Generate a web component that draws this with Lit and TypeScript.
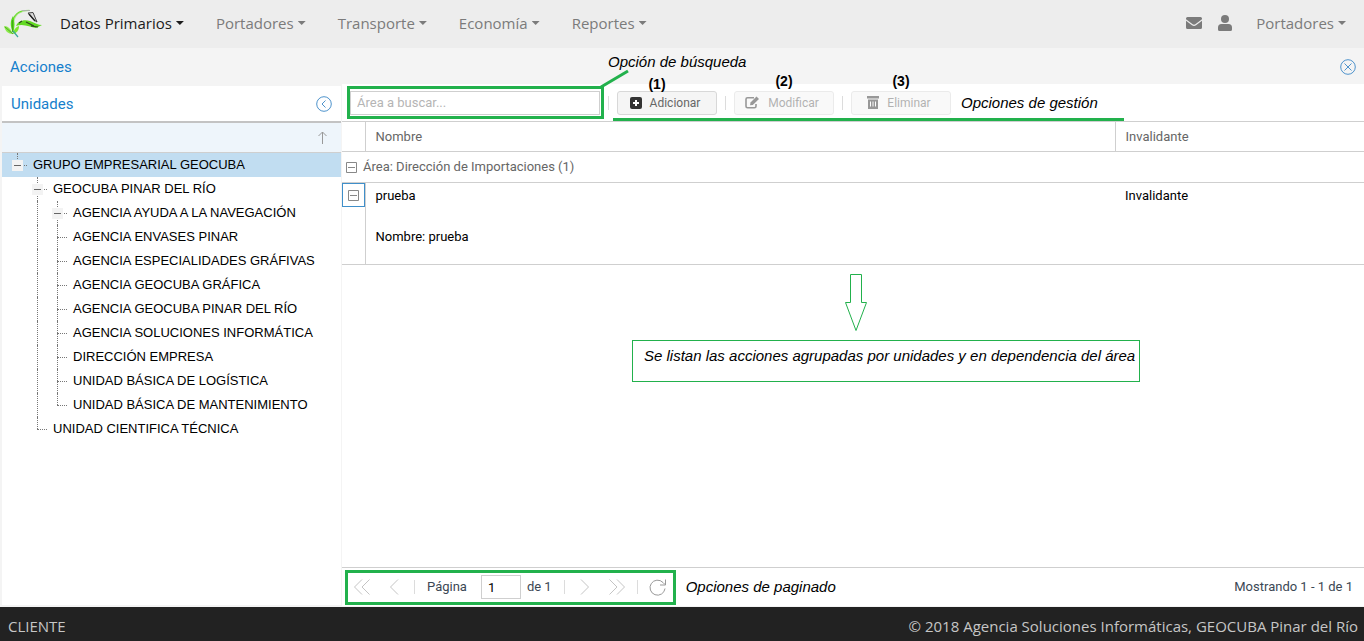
import { LitElement, html, css, svg, nothing } from "lit";
import { customElement } from "lit/decorators.js";
import { classMap } from "lit/directives/class-map.js";

type Guide = "empty" | "line" | "tee" | "elbow";

interface TreeRow {
  label: string;
  guides: Guide[];
  expandable?: boolean;
  selected?: boolean;
}

const TREE: TreeRow[] = [
  { label: "GRUPO EMPRESARIAL GEOCUBA", guides: ["elbow"], expandable: true, selected: true },
  { label: "GEOCUBA PINAR DEL RÍO", guides: ["empty", "tee"], expandable: true },
  { label: "AGENCIA AYUDA A LA NAVEGACIÓN", guides: ["empty", "line", "tee"], expandable: true },
  { label: "AGENCIA ENVASES PINAR", guides: ["empty", "line", "tee"] },
  { label: "AGENCIA ESPECIALIDADES GRÁFIVAS", guides: ["empty", "line", "tee"] },
  { label: "AGENCIA GEOCUBA GRÁFICA", guides: ["empty", "line", "tee"] },
  { label: "AGENCIA GEOCUBA PINAR DEL RÍO", guides: ["empty", "line", "tee"] },
  { label: "AGENCIA SOLUCIONES INFORMÁTICA", guides: ["empty", "line", "tee"] },
  { label: "DIRECCIÓN EMPRESA", guides: ["empty", "line", "tee"] },
  { label: "UNIDAD BÁSICA DE LOGÍSTICA", guides: ["empty", "line", "tee"] },
  { label: "UNIDAD BÁSICA DE MANTENIMIENTO", guides: ["empty", "line", "elbow"] },
  { label: "UNIDAD CIENTIFICA TÉCNICA", guides: ["empty", "elbow"] },
];

const MENUS = ["Datos Primarios", "Portadores", "Transporte", "Economía", "Reportes"];

const reset = css`
  *,
  *::before,
  *::after {
    box-sizing: border-box;
  }
  button {
    font: inherit;
    color: inherit;
    background: none;
    border: 0;
    padding: 0;
    margin: 0;
    display: inline-flex;
    align-items: center;
    justify-content: center;
  }
  svg {
    display: block;
    flex: none;
  }
`;

const stroked = (size: number, body: unknown) => html`<svg
  width=${size}
  height=${size}
  viewBox="0 0 ${size} ${size}"
  fill="none"
  stroke="currentColor"
  aria-hidden="true"
>
  ${body}
</svg>`;

@customElement("nav-bar")
class NavBar extends LitElement {
  static styles = [
    reset,
    css`
      :host {
        display: flex;
        align-items: center;
        justify-content: space-between;
        box-sizing: border-box;
        height: 48px;
        padding: 0 18px 2px 4px;
        background: #ededed;
        color: #7b7b7b;
        font: 15px/24px "Open Sans", "Noto Sans", sans-serif;
      }
      .menus {
        display: flex;
        align-items: center;
        gap: 32px;
      }
      .logo {
        margin-right: -14px;
      }
      .menu {
        gap: 4px;
        white-space: nowrap;
      }
      .menu.active {
        color: #1c1c1c;
      }
      .caret {
        width: 8px;
        height: 4px;
        background: currentColor;
        clip-path: polygon(0 0, 100% 0, 50% 100%);
      }
      .user {
        display: flex;
        align-items: center;
        gap: 16px;
      }
      .user .menu {
        margin-left: 8px;
      }
    `,
  ];

  private menu(label: string, active = false) {
    return html`<button class=${classMap({ menu: true, active })}>
      ${label}<span class="caret"></span>
    </button>`;
  }

  render() {
    return html`
      <nav class="menus">
        <svg class="logo" width="38" height="30" viewBox="0 0 38 30" fill="none" aria-label="Logo" role="img">
          <path d="M9 14C11 7 16 2 26 2.500" stroke="#a9e58a" stroke-width="1.200" />
          <path d="M9 11C11 7 14 4 18 3" stroke="#6bdc2c" stroke-width="1.200" />
          <path d="M18 2.500L26 2.500" stroke="#aaa" stroke-width=".8" />
          <path d="M24 5L29 4.500L33 14L30 12Z" fill="#ddd" stroke="#444" stroke-width="1" />
          <path d="M25 6L31 13" stroke="#222" stroke-width="1.400" />
          <path d="M12 18C14 13 20 11 26 13C31 15 34 17 38 17L32 20C26 19 19 15 12 18Z" fill="#62d922" />
          <path d="M15 15L18 13M22 14L30 18M27 18L34 19" stroke="#2c4a1c" stroke-width="1.200" />
          <path d="M9 8C6 13 6 18 9 25C11 19 11 14 9 8Z" fill="#55d61a" />
          <path d="M0 18C4 18 7 21 9 26C4 26 1 23 0 18Z" fill="#8bea4a" />
          <path d="M9 26C9 22 12 19 15 18C15 22 13 25 9 26Z" fill="#7ee62f" />
          <path d="M1 19L9 26M8.500 12V24" stroke="#3d9a19" stroke-width=".8" />
          <path d="M9 23L14 29" stroke="#3aa79a" stroke-width="1.200" />
        </svg>
        ${MENUS.map((m, i) => this.menu(m, i === 0))}
      </nav>
      <div class="user">
        <button aria-label="Mensajes">
          <svg width="16" height="12" viewBox="0 0 16 12" fill="currentColor">
            <path
              d="M1.500 0h13a1.500 1.500 0 0 1 1.500 1.500v.7L9.300 7.300c-.8.600-1.800.600-2.600 0L0 2.200v-.7A1.500 1.500 0 0 1 1.500 0zM0 3.700l6 4.600c1.200.9 2.800.9 4 0l6-4.600v6.800a1.500 1.500 0 0 1-1.500 1.500h-13A1.500 1.500 0 0 1 0 10.500z"
            />
          </svg>
        </button>
        <button aria-label="Usuario">
          <svg width="14" height="16" viewBox="0 0 14 16" fill="currentColor">
            <circle cx="7" cy="4" r="4" />
            <path d="M3.500 9h7A3.500 3.500 0 0 1 14 12.500v2a1.500 1.500 0 0 1-1.500 1.500h-11A1.500 1.500 0 0 1 0 14.500v-2A3.500 3.500 0 0 1 3.500 9z" />
          </svg>
        </button>
        ${this.menu("Portadores")}
      </div>
    `;
  }
}

@customElement("unit-tree")
class UnitTree extends LitElement {
  static styles = [
    reset,
    css`
      :host {
        display: flex;
        flex-direction: column;
        background: #fff;
        font: 13px/24px "Liberation Sans", Arial, sans-serif;
        color: #000;
      }
      .head {
        display: flex;
        align-items: center;
        justify-content: space-between;
        height: 37px;
        padding: 0 9px;
        border-bottom: 2px solid #c3c3c3;
      }
      h2 {
        margin: 0;
        font: 15px/20px Roboto, sans-serif;
        color: #157fcc;
      }
      .collapse {
        color: #4e93cc;
      }
      .sort {
        display: flex;
        justify-content: flex-end;
        height: 30px;
        padding: 0 13px;
        background: #eef5fb;
        border-bottom: 1px solid #cfcfcf;
        color: #999;
      }
      ul {
        list-style: none;
        margin: 0;
        padding: 0;
      }
      .row {
        display: flex;
        height: 24px;
        padding-left: 5px;
        white-space: nowrap;
      }
      .row.selected {
        background: #c1ddf1;
      }
      .label {
        padding-left: 6px;
      }
      .guide {
        display: grid;
        grid-template: 12px 12px / 10px 10px;
        width: 20px;
      }
      .line::before,
      .tee::before {
        content: "";
        grid-area: 1 / 2 / 3 / 3;
        border-left: 1px dotted #777;
      }
      .elbow::before {
        content: "";
        grid-area: 1 / 2 / 2 / 3;
        border-left: 1px dotted #777;
      }
      .tee::after,
      .elbow::after {
        content: "";
        grid-area: 2 / 2 / 3 / 3;
        border-top: 1px dotted #777;
      }
      .toggle {
        grid-area: 1 / 1 / 3 / 3;
        place-self: center;
        width: 11px;
        height: 11px;
        margin-left: 1px;
        background: #f3f3f3;
        z-index: 1;
      }
      .toggle::before {
        content: "";
        width: 7px;
        height: 1px;
        background: #666;
      }
    `,
  ];

  private guide(kind: Guide, toggle: boolean) {
    return html`<span class="guide ${kind}"
      >${toggle ? html`<button class="toggle" aria-label="Contraer"></button>` : nothing}</span
    >`;
  }

  render() {
    return html`
      <header class="head">
        <h2>Unidades</h2>
        <button class="collapse" aria-label="Ocultar panel">
          ${stroked(16, svg`<circle cx="8" cy="8" r="7.300"/><path d="M9.500 4.500L6 8l3.500 3.500"/>`)}
        </button>
      </header>
      <button class="sort" aria-label="Ordenar">
        ${stroked(12, svg`<path transform="translate(0 -1)" d="M6.500 14V1M2.500 5L6.500 1L10.500 5" />`)}
      </button>
      <ul>
        ${TREE.map(
          (r) => html`<li class=${classMap({ row: true, selected: !!r.selected })}>
            ${r.guides.map((g, i) => this.guide(g, !!r.expandable && i === r.guides.length - 1))}
            <span class="label">${r.label}</span>
          </li>`
        )}
      </ul>
    `;
  }
}

@customElement("actions-grid")
class ActionsGrid extends LitElement {
  static styles = [
    reset,
    css`
      :host {
        display: flex;
        flex-direction: column;
        background: #fff;
        font: 13px/20px Roboto, sans-serif;
        color: #666;
        min-width: 0;
      }
      .toolbar {
        display: flex;
        align-items: center;
        gap: 8px;
        height: 37px;
        padding: 0 8px;
      }
      .search {
        position: relative;
        display: flex;
      }
      .search input {
        width: 250px;
        height: 24px;
        padding: 0 6px;
        border: 1px solid #cfcfcf;
        outline: 0;
        font: inherit;
      }
      .search input::placeholder {
        color: #b5b5b5;
        opacity: 1;
      }
      .mark {
        position: absolute;
        inset: -5px -4px -4px -3px;
        border: 3px solid #22b14c;
        pointer-events: none;
      }
      .leader {
        position: absolute;
        left: 250px;
        top: -22px;
        pointer-events: none;
      }
      .note {
        font: italic 15px/20px "Liberation Sans", Arial, sans-serif;
        color: #000;
        white-space: nowrap;
      }
      .search .note {
        position: absolute;
        left: 258px;
        top: -39px;
      }
      .sep {
        width: 1px;
        height: 14px;
        background: #dcdcdc;
      }
      .manage {
        position: relative;
        display: flex;
        align-items: center;
        gap: 8px;
        padding-right: 26px;
      }
      .manage::after {
        content: "";
        position: absolute;
        left: -4px;
        right: 0;
        bottom: -6px;
        height: 3px;
        background: #22b14c;
      }
      .action {
        position: relative;
        display: flex;
      }
      .action button {
        width: 100px;
        height: 24px;
        gap: 8px;
        padding-right: 4px;
        border: 1px solid #d8d8d8;
        border-radius: 3px;
        background: #f5f5f5;
        font-size: 12px;
      }
      .action button:disabled {
        opacity: 0.5;
      }
      .action svg {
        color: #333;
      }
      .tag {
        position: absolute;
        inset: -19px 0 auto;
        text-align: center;
        font: bold 14px/18px "Liberation Sans", Arial, sans-serif;
        color: #000;
        pointer-events: none;
      }
      .tag.low {
        inset: -16px 20px auto 0;
      }
      .manage .note {
        margin-left: 2px;
      }
      table {
        width: 100%;
        table-layout: fixed;
        border-collapse: collapse;
      }
      .c-toggle {
        width: 23px;
      }
      .c-flag {
        width: 249px;
      }
      th,
      td {
        padding: 0 10px;
        font-weight: normal;
        text-align: left;
        vertical-align: middle;
      }
      thead tr {
        height: 30px;
        border-top: 1px solid #cfcfcf;
        border-bottom: 1px solid #cfcfcf;
      }
      th + th {
        border-left: 1px solid #cfcfcf;
      }
      .group {
        height: 31px;
        border-bottom: 1px solid #cfcfcf;
      }
      .group td {
        padding: 2px 4px 0;
      }
      .group button {
        gap: 6px;
      }
      .group svg {
        color: #888;
      }
      .record {
        color: #000;
      }
      .record td {
        height: 25px;
        padding-top: 2px;
      }
      .record .side {
        padding: 0;
        border-right: 1px solid #cfcfcf;
        vertical-align: top;
      }
      .side button {
        width: 23px;
        height: 24px;
        border: 1px solid #3f8fca;
        color: #888;
      }
      .detail {
        border-bottom: 1px solid #cfcfcf;
      }
      .detail td {
        height: 57px;
      }
      .body {
        flex: 1;
      }
      .callout {
        width: max-content;
        margin: 9px 0 0 290px;
      }
      .callout svg {
        margin-left: 213px;
      }
      .callout p {
        margin: 8px 0 0;
        padding: 5px 4px 15px 11px;
        border: 1px solid #22b14c;
      }
      .pager {
        display: flex;
        align-items: center;
        height: 40px;
        padding: 0 11px 0 6px;
        border-top: 1px solid #cfcfcf;
        border-bottom: 1px solid #f4f4f4;
        color: #3b4754;
      }
      .pages {
        position: relative;
        display: flex;
        align-items: center;
      }
      .pages .mark {
        inset: -5px -4px -6px -3px;
      }
      .pages button {
        width: 28px;
        height: 24px;
        color: #c4c4c4;
      }
      .pages button + button {
        margin-left: 4px;
      }
      .pages .refresh {
        color: #999;
      }
      .pages label {
        display: flex;
        align-items: center;
        gap: 14px;
        margin: 0 6px;
      }
      .pages input {
        width: 40px;
        height: 24px;
        padding: 0 6px;
        border: 1px solid #cfcfcf;
        outline: 0;
        color: #000;
        font: inherit;
      }
      .pages .sep {
        margin: 0 6px;
      }
      .pager .note {
        margin-left: 14px;
      }
      .status {
        margin-left: auto;
      }
      .of {
        margin-right: 6px;
      }
    `,
  ];

  private action(label: string, tag: string, icon: unknown, disabled = false) {
    return html`<div class="action">
      <button ?disabled=${disabled}>${icon}${label}</button>
      <span class=${classMap({ tag: true, low: !disabled })}>${tag}</span>
    </div>`;
  }

  private box() {
    return stroked(11, svg`<path d="M.5 .5h10v10H.5zM2 5.500h7" />`);
  }

  render() {
    const add = html`<svg width="12" height="12" viewBox="0 0 12 12">
      <rect width="12" height="12" rx="2" fill="currentColor" />
      <path d="M6 3v6M3 6h6" stroke="#fff" stroke-width="2" />
    </svg>`;
    const edit = html`<svg width="15" height="13" viewBox="0 0 15 13" fill="none" stroke="currentColor">
      <path d="M9 1.700H2.500Q1 1.700 1 3.200v7.100Q1 11.800 2.500 11.800h7Q11 11.800 11 10.300V8" stroke-width="1.600" />
      <path d="M5 9.200l.5-2.700L11.500 .5l2.500 2.400-6.200 6z" fill="currentColor" stroke="none" />
    </svg>`;
    const trash = html`<svg width="12" height="13" viewBox="0 0 12 13">
      <path d="M0 0h12v2.500H0zM1 3.500h10V13H1z" fill="currentColor" />
      <path d="M3.500 5.500v5M6 5.500v5M8.500 5.500v5" stroke="#fff" />
    </svg>`;
    return html`
      <div class="toolbar">
        <div class="search">
          <input type="text" placeholder="Área a buscar..." aria-label="Área a buscar" />
          <span class="mark"></span>
          <svg class="leader" width="30" height="20" viewBox="0 0 30 20" fill="none">
            <path d="M1 18L28 2" stroke="#22b14c" stroke-width="3" />
          </svg>
          <span class="note">Opción de búsqueda</span>
        </div>
        <span class="sep"></span>
        <div class="manage">
          ${this.action("Adicionar", "(1)", add)}
          <span class="sep"></span>
          ${this.action("Modificar", "(2)", edit, true)}
          <span class="sep"></span>
          ${this.action("Eliminar", "(3)", trash, true)}
          <span class="note">Opciones de gestión</span>
        </div>
      </div>
      <table>
        <colgroup>
          <col class="c-toggle" />
          <col />
          <col class="c-flag" />
        </colgroup>
        <thead>
          <tr>
            <th></th>
            <th>Nombre</th>
            <th>Invalidante</th>
          </tr>
        </thead>
        <tbody>
          <tr class="group">
            <td colspan="3"><button>${this.box()}Área: Dirección de Importaciones (1)</button></td>
          </tr>
          <tr class="record">
            <td class="side" rowspan="2">
              <button aria-label="Contraer fila">${this.box()}</button>
            </td>
            <td>prueba</td>
            <td>Invalidante</td>
          </tr>
          <tr class="record detail">
            <td colspan="2">Nombre: prueba</td>
          </tr>
        </tbody>
      </table>
      <div class="body">
        <div class="callout">
          <svg width="22" height="58" viewBox="0 0 22 58" fill="none" stroke="#22b14c">
            <path d="M5.500 .5h11v28h5L11 56.500L.5 28.500h5z" />
          </svg>
          <p class="note">Se listan las acciones agrupadas por unidades y en dependencia del área</p>
        </div>
      </div>
      <div class="pager">
        <div class="pages">
          <button aria-label="Primera página">
            ${stroked(16, svg`<path d="M8 .5L.5 8L8 15.500M15.500 .5L8 8l7.500 7.500" />`)}
          </button>
          <button aria-label="Página anterior">
            ${stroked(16, svg`<path d="M12 .5L4.500 8l7.500 7.500" />`)}
          </button>
          <span class="sep"></span>
          <label>Página<input type="text" value="1" /></label>
          <span class="of">de 1</span>
          <span class="sep"></span>
          <button aria-label="Página siguiente">
            ${stroked(16, svg`<path d="M4 .5L11.500 8L4 15.500" />`)}
          </button>
          <button aria-label="Última página">
            ${stroked(16, svg`<path d="M.5 .5L8 8L.5 15.500M8 .5L15.500 8L8 15.500" />`)}
          </button>
          <span class="sep"></span>
          <button class="refresh" aria-label="Actualizar">
            ${stroked(17, svg`<path d="M16 9.500A7.500 7.500 0 1 1 14 3.500L16 5.500M16.500 .5V6H11" />`)}
          </button>
          <span class="mark"></span>
        </div>
        <span class="note">Opciones de paginado</span>
        <span class="status">Mostrando 1 - 1 de 1</span>
      </div>
    `;
  }
}

@customElement("app-root")
class AppRoot extends LitElement {
  static styles = [
    reset,
    css`
      :host {
        display: flex;
        flex-direction: column;
        min-height: 100vh;
        background: #f4f4f4;
      }
      .title {
        display: flex;
        align-items: center;
        justify-content: space-between;
        height: 36px;
        padding: 1px 8px 0 10px;
      }
      h1 {
        margin: 0;
        font: 15px/20px Roboto, sans-serif;
        color: #157fcc;
      }
      .close {
        color: #4e93cc;
      }
      main {
        flex: 1;
        display: grid;
        grid-template-columns: 339px minmax(0, 1fr);
        gap: 1px;
        padding-left: 2px;
      }
      unit-tree {
        margin: 2px 0;
      }
      footer {
        display: flex;
        align-items: center;
        justify-content: space-between;
        height: 34px;
        padding: 4px 6px 0 8px;
        background: #222;
        color: #c6c6c6;
        font: 15px/24px "Open Sans", "Noto Sans", sans-serif;
      }
    `,
  ];

  render() {
    return html`
      <nav-bar></nav-bar>
      <header class="title">
        <h1>Acciones</h1>
        <button class="close" aria-label="Cerrar">
          ${stroked(16, svg`<circle cx="8" cy="8" r="7.300"/><path d="M4.500 4.500l7 7M11.500 4.500l-7 7"/>`)}
        </button>
      </header>
      <main>
        <unit-tree></unit-tree>
        <actions-grid></actions-grid>
      </main>
      <footer>
        <span>CLIENTE</span>
        <span>© 2018 Agencia Soluciones Informáticas, GEOCUBA Pinar del Río</span>
      </footer>
    `;
  }
}
